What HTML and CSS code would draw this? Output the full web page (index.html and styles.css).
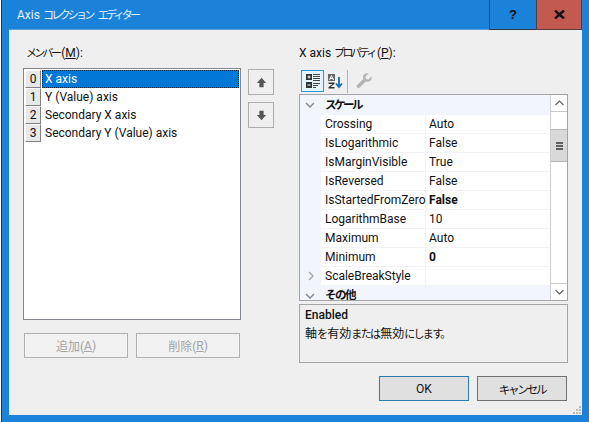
FILE: index.html
```html
<!DOCTYPE html>
<html>
<head>
  <title>Axis コレクション エディター</title>
  <link rel="stylesheet" href="styles.css">
</head>
<body>
  <div class="window">
    <div class="titlebar">
      <span class="title">Axis <span class="kana">コレクション</span> <span class="kana">エディター</span></span>
      <div class="caption-btn help-btn">?</div>
      <div class="caption-btn close-btn">
        <svg width="11" height="9" viewBox="0 0 11 9"><path d="M1 0.5L10 8.5M10 0.5L1 8.5" stroke="#111" stroke-width="2.4" fill="none"/></svg>
      </div>
    </div>

    <div class="client">
      <div class="left-col">
        <div class="label"><span class="kana">メンバー</span>(<u>M</u>):</div>
        <div class="member-row">
          <div class="listbox">
            <div class="item"><span class="index">0</span><span class="name selected">X axis</span></div>
            <div class="item"><span class="index">1</span><span class="name">Y (Value) axis</span></div>
            <div class="item"><span class="index">2</span><span class="name">Secondary X axis</span></div>
            <div class="item"><span class="index">3</span><span class="name">Secondary Y (Value) axis</span></div>
          </div>
          <div class="move-btns">
            <div class="move-btn">
              <svg width="11" height="11" viewBox="0 0 13 13"><path d="M6.5 1L12 7H9V12H4V7H1Z" fill="#555"/></svg>
            </div>
            <div class="move-btn">
              <svg width="11" height="11" viewBox="0 0 13 13"><path d="M6.5 12L12 6H9V1H4V6H1Z" fill="#555"/></svg>
            </div>
          </div>
        </div>
        <div class="add-row">
          <div class="btn disabled">追加(<u>A</u>)</div>
          <div class="btn disabled">削除(<u>R</u>)</div>
        </div>
      </div>

      <div class="right-col">
        <div class="label">X axis <span class="kana">プロパティ</span>(<u>P</u>):</div>
        <div class="toolbar">
          <div class="tool active">
            <svg width="14" height="14" viewBox="0 0 14 14">
              <rect x="0" y="0" width="6" height="6" fill="#333"/>
              <rect x="0" y="8" width="6" height="6" fill="#333"/>
              <path d="M1.5 3H4.5M3 1.5V4.5M1.5 11H4.5" stroke="#fff" fill="none"/>
              <path d="M7 0.5H14M7 2.5H14M7 4.5H14M7 6.5H14M7 9.5H14M7 11.5H12M7 13.5H10" stroke="#444" fill="none"/>
            </svg>
          </div>
          <div class="tool sort">
            <svg width="15" height="15" viewBox="0 0 15 15">
              <rect x="0" y="0" width="7" height="7" fill="#666"/>
              <path d="M1.5 6L3.5 1.5L5.5 6M2.2 4.5H4.8" stroke="#fff" fill="none"/>
              <path d="M0.5 8.5H6.5V9.8L2.6 13H6.5V14.5H0.5V13.2L4.4 10H0.5Z" fill="#333"/>
              <path d="M11 3V13M8 9.5L11 13L14 9.5" stroke="#1a6ea8" stroke-width="1.8" fill="none"/>
            </svg>
          </div>
          <div class="tool-sep"></div>
          <div class="tool wrench">
            <svg width="16" height="16" viewBox="0 0 16 16"><path d="M15.5 3.5L12.5 6.5L10 6L9.5 3.5L12.5 0.5C10 -0.5 7 1 7 4C7 4.8 7.2 5.5 7.4 6L0.8 12.5C-0.2 13.5 2.2 16 3.2 15L9.8 8.5C13 9.8 16.5 7 15.5 3.5Z" fill="#b4b4b4"/></svg>
          </div>
        </div>

        <div class="grid">
          <div class="rows">
            <div class="cat first"><span class="chev"><svg width="10" height="6" viewBox="0 0 10 6"><path d="M1 1L5 5L9 1" stroke="#8a8a8a" stroke-width="1.5" fill="none"/></svg></span><span class="bold-kana">スケール</span></div>
            <div class="prop"><span class="key">Crossing</span><span class="val">Auto</span></div>
            <div class="prop"><span class="key">IsLogarithmic</span><span class="val">False</span></div>
            <div class="prop"><span class="key">IsMarginVisible</span><span class="val">True</span></div>
            <div class="prop"><span class="key">IsReversed</span><span class="val">False</span></div>
            <div class="prop"><span class="key">IsStartedFromZero</span><span class="val bold">False</span></div>
            <div class="prop"><span class="key">LogarithmBase</span><span class="val">10</span></div>
            <div class="prop"><span class="key">Maximum</span><span class="val">Auto</span></div>
            <div class="prop"><span class="key">Minimum</span><span class="val bold">0</span></div>
            <div class="prop expandable">
              <span class="expander"><svg width="6" height="10" viewBox="0 0 6 10"><path d="M1 1L5 5L1 9" stroke="#a8a8a8" stroke-width="1.5" fill="none"/></svg></span>
              <span class="key">ScaleBreakStyle</span><span class="val"></span>
            </div>
            <div class="cat"><span class="chev"><svg width="10" height="6" viewBox="0 0 10 6"><path d="M1 1L5 5L9 1" stroke="#8a8a8a" stroke-width="1.5" fill="none"/></svg></span><span class="other">その他</span></div>
          </div>
          <div class="scrollbar">
            <div class="sb-arrow"><svg width="9" height="6" viewBox="0 0 9 6"><path d="M0.5 5L4.5 1L8.5 5" stroke="#606060" stroke-width="1.2" fill="none"/></svg></div>
            <div class="sb-track">
              <div class="sb-thumb"><span></span><span></span><span></span></div>
            </div>
            <div class="sb-arrow"><svg width="9" height="6" viewBox="0 0 9 6"><path d="M0.5 1L4.5 5L8.5 1" stroke="#606060" stroke-width="1.2" fill="none"/></svg></div>
          </div>
        </div>

        <div class="helpbox">
          <div class="help-title">Enabled</div>
          <div class="help-text">軸<span class="hira">を</span>有効<span class="hira">または</span>無効<span class="hira">にします。</span></div>
        </div>

        <div class="ok-row">
          <div class="btn dialog default">OK</div>
          <div class="btn dialog"><span class="cancel">キャンセル</span></div>
        </div>
      </div>

      <!-- resize grip -->
      <svg class="grip" width="9" height="9" viewBox="0 0 9 9" fill="#b8b8b8">
        <rect x="7" y="1" width="2" height="2"/>
        <rect x="4" y="4" width="2" height="2"/><rect x="7" y="4" width="2" height="2"/>
        <rect x="1" y="7" width="2" height="2"/><rect x="4" y="7" width="2" height="2"/><rect x="7" y="7" width="2" height="2"/>
      </svg>
    </div>
  </div>
</body>
</html>
```

FILE: styles.css
```css
html, body {
  margin: 0;
  padding: 0;
}

body {
  width: 589px;
  height: 422px;
  overflow: hidden;
  background-color: #fff;
  font-family: Roboto, "Noto Sans CJK JP", sans-serif;
  font-size: 12px;
  color: #111;
}

u {
  text-underline-offset: 1px;
}

/* narrow kana like the dialog's UI font */
.kana {
  font-size: 11px;
  letter-spacing: -2.7px;
  margin-right: 2px;
}

.hira {
  font-size: 11px;
  letter-spacing: -1.7px;
  margin-right: 1px;
}

.bold-kana {
  font-size: 11.5px;
  letter-spacing: -2.5px;
}

.cancel {
  font-size: 11.5px;
  letter-spacing: -2.2px;
}

.other {
  font-size: 11.5px;
  letter-spacing: -1.5px;
}

.window {
  width: 588px;
  height: 422px;
  margin-left: 1px;
  box-sizing: border-box;
  border-left: 1px solid #333;
  padding: 0 7px 7px 7px;
  background: #1a82d8;
  display: flex;
  flex-direction: column;
}

/* Title bar */
.titlebar {
  height: 29px;
  display: flex;
  align-items: flex-start;
  flex: none;
  border-bottom: 1px solid #5a9fd8;
}

.title {
  flex: 1;
  color: #e8f2fb;
  font-size: 12px;
  line-height: 30px;
  padding-left: 8px;
}

.caption-btn {
  height: 30px;
  box-sizing: border-box;
  border: 1px solid #2a3a48;
  border-top: none;
  display: flex;
  align-items: center;
  justify-content: center;
}

.help-btn {
  width: 47px;
  border-right: none;
  font-family: "Liberation Sans", sans-serif;
  font-weight: bold;
  font-size: 13px;
}

.close-btn {
  width: 46px;
  background: #c25a50;
  border-color: #5a3a3a;
}

/* Dialog body */
.client {
  flex: 1;
  position: relative;
  background: #efefef;
  display: flex;
  padding: 14px 14px 0 14px;
  min-height: 0;
}

.grip {
  position: absolute;
  right: 1px;
  bottom: 1px;
}

.left-col {
  width: 251px;
  margin-right: 25px;
  flex: none;
}

.right-col {
  flex: 1;
  min-width: 0;
}

.label {
  height: 24px;
  line-height: 18px;
  font-size: 12px;
  padding-left: 3px;
}

.right-col .label {
  padding-left: 0;
}

.member-row {
  display: flex;
}

.listbox {
  width: 218px;
  height: 252px;
  box-sizing: border-box;
  background: #fff;
  border: 1px solid #82868e;
  padding: 1px;
  flex: none;
}

.item {
  display: flex;
  height: 18px;
  line-height: 19px;
}

.index {
  width: 16px;
  box-sizing: border-box;
  background: #e8e8e8;
  border: 1px solid;
  border-color: #fff #808080 #808080 #fff;
  text-align: center;
  line-height: 16px;
  flex: none;
}

.name {
  flex: 1;
  padding-left: 3px;
  margin-left: 1px;
}

.name.selected {
  background: #0078d7;
  color: #fff;
  outline: 1px dotted #0a2a50;
  outline-offset: -1px;
}

.move-btns {
  margin-left: 7px;
  margin-top: 1px;
  display: flex;
  flex-direction: column;
  gap: 7px;
}

.move-btn {
  width: 26px;
  height: 26px;
  box-sizing: border-box;
  border: 1px solid #adadad;
  display: flex;
  align-items: center;
  justify-content: center;
}

.add-row {
  display: flex;
  gap: 8px;
  margin-top: 13px;
  padding-left: 1px;
}

.btn {
  box-sizing: border-box;
  display: flex;
  align-items: center;
  justify-content: center;
}

.btn.disabled {
  width: 104px;
  height: 25px;
  background: #f2f2f2;
  border: 1px solid #b0b0b0;
  color: #a4a4a4;
}

/* Property grid */
.toolbar {
  display: flex;
  align-items: center;
  height: 24px;
  margin-left: 2px;
  margin-top: 1px;
}

.tool {
  width: 23px;
  height: 22px;
  box-sizing: border-box;
  display: flex;
  align-items: center;
  justify-content: center;
}

.tool.active {
  border: 1px solid #2a9ae0;
  background: #e6f3fb;
}

.tool.sort {
  justify-content: flex-start;
  padding-left: 4px;
}

.tool-sep {
  width: 1px;
  height: 23px;
  background: #b4b4b4;
  margin-right: 7px;
}

.tool.wrench {
  width: 18px;
}

.grid {
  width: 269px;
  height: 207px;
  box-sizing: border-box;
  border: 1px solid #a4a4a4;
  background: #fff;
  display: flex;
  margin-top: 1px;
  overflow: hidden;
}

.rows {
  flex: 1;
  min-width: 0;
}

.cat {
  height: 19px;
  background: #f2f6fc;
  font-weight: bold;
  font-size: 12px;
  line-height: 19px;
  display: flex;
  align-items: center;
}

.cat.first {
  height: 20px;
}

.chev {
  width: 25px;
  padding-left: 5px;
  box-sizing: border-box;
  display: flex;
  align-items: center;
  flex: none;
}

.prop {
  display: flex;
  height: 19px;
  line-height: 18px;
  border-left: 21px solid #f2f6fc;
  box-sizing: border-box;
  border-bottom: 1px solid #f3f3f7;
}

.prop.expandable {
  border-left: none;
}

.expander {
  width: 21px;
  background: #f2f6fc;
  flex: none;
  display: flex;
  align-items: center;
  justify-content: center;
}

.key {
  width: 105px;
  padding-left: 4px;
  box-sizing: border-box;
  border-right: 1px solid #f3f3f7;
  flex: none;
  white-space: nowrap;
}

.val {
  padding-left: 3px;
}

.val.bold {
  font-weight: bold;
}

.scrollbar {
  width: 17px;
  flex: none;
  background: #fff;
  display: flex;
  flex-direction: column;
  border-left: 1px solid #d0d0d0;
  box-sizing: border-box;
}

.sb-arrow {
  height: 17px;
  flex: none;
  display: flex;
  align-items: center;
  justify-content: center;
  border-bottom: 1px solid #c8c8c8;
  box-sizing: border-box;
}

.sb-track {
  flex: 1;
  padding-top: 17px;
}

.sb-thumb {
  height: 33px;
  background: #d9d9d9;
  border-top: 1px solid #b4b4b4;
  border-bottom: 1px solid #b4b4b4;
  box-sizing: border-box;
  display: flex;
  flex-direction: column;
  align-items: center;
  justify-content: center;
  gap: 1px;
}

.sb-thumb span {
  width: 7px;
  height: 2px;
  background: #606060;
}

.scrollbar .sb-arrow:last-child {
  border-bottom: none;
  border-top: 1px solid #c8c8c8;
}

.helpbox {
  width: 269px;
  height: 59px;
  box-sizing: border-box;
  border: 1px solid #a4a4a4;
  margin-top: 3px;
  padding: 1px 5px;
}

.help-title {
  font-weight: 500;
  line-height: 18px;
  font-size: 12px;
}

.help-text {
  line-height: 20px;
}

.ok-row {
  display: flex;
  justify-content: flex-end;
  gap: 8px;
  margin-top: 13px;
  padding-right: 1px;
}

.btn.dialog {
  width: 90px;
  height: 25px;
  background: #e0e0e0;
  border: 1px solid #707070;
}

.btn.dialog.default {
  border-color: #2a7ab0;
}
```
